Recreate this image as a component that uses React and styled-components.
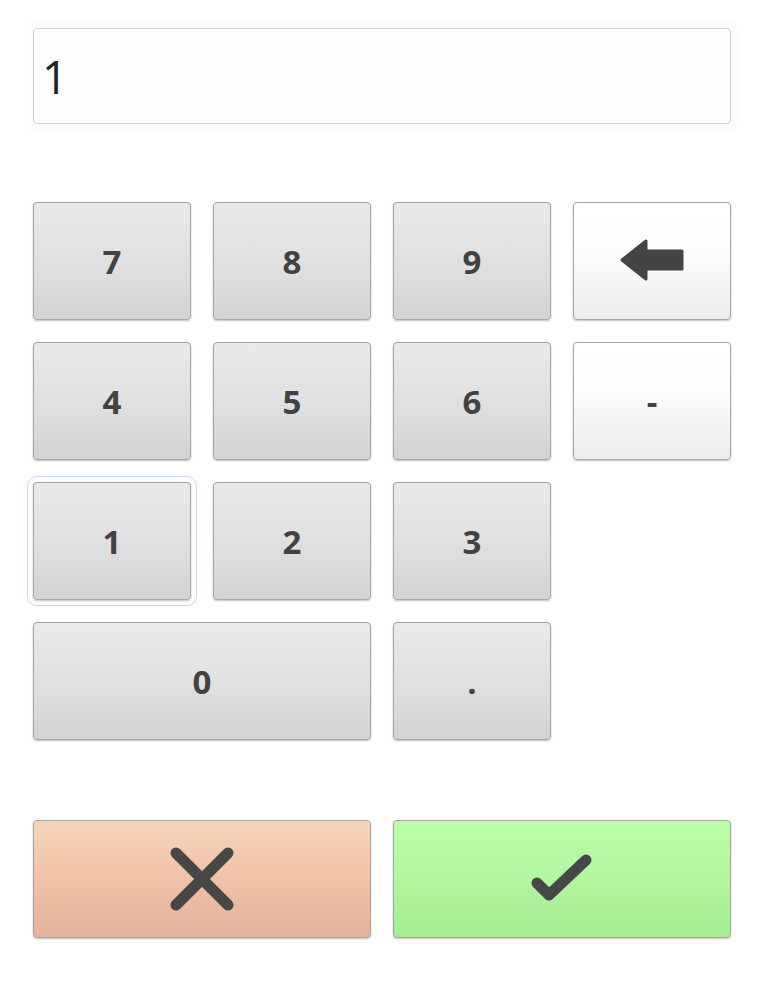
import React from "react";
import styled, { createGlobalStyle, css } from "styled-components";

const Global = createGlobalStyle`
  html, body { margin: 0; padding: 0; background: #ffffff; }
  body { font-family: "Open Sans", "DejaVu Sans", sans-serif; }
  * { box-sizing: border-box; }
`;

const Page = styled.div`
  width: 776px;
  height: 984px;
  padding: 28px 0 0 33px;
  display: flex;
  flex-direction: column;
`;

const Display = styled.div`
  width: 698px;
  height: 96px;
  border: 1px solid #d2d2d2;
  border-radius: 4px;
  background: #fefefe;
  box-shadow: 0 0 0 8px #fdfdfd;
  display: flex;
  align-items: center;
  padding-left: 8px;
  font-size: 45px;
  font-weight: 400;
  color: #222222;
`;

const Pad = styled.div`
  margin-top: 78px;
  display: grid;
  grid-template-columns: repeat(4, 158px);
  grid-auto-rows: 118px;
  gap: 22px;
`;

const variants = {
  gray: css`
    background: linear-gradient(#e9e9e9, #e3e3e3 40%, #d3d3d3);
  `,
  white: css`
    background: linear-gradient(#ffffff, #fdfdfd 40%, #ececec);
  `,
  cancel: css`
    background: linear-gradient(#f5d6bb, #f2c1a7 50%, #e2b29c);
  `,
  ok: css`
    background: linear-gradient(#bbfca9, #b2f6a0 50%, #a5ec91);
  `,
};

const Key = styled.button`
  grid-column: span ${(p) => p.$span || 1};
  border: 1px solid #a6a6a6;
  border-radius: 4px;
  box-shadow: 0 1px 2px rgba(0, 0, 0, 0.25);
  ${(p) => variants[p.$variant || "gray"]}
  font-family: "Open Sans", "DejaVu Sans", sans-serif;
  font-weight: 700;
  font-size: 33px;
  color: #424242;
  display: flex;
  align-items: center;
  justify-content: center;
  padding: 0;
  cursor: pointer;
  ${(p) =>
    p.$focused &&
    css`
      outline: 1px solid #c3dbf3;
      outline-offset: 5px;
    `}
`;

const Actions = styled.div`
  margin-top: 80px;
  display: grid;
  grid-template-columns: repeat(2, 338px);
  grid-auto-rows: 118px;
  gap: 22px;
`;

const BackIcon = () => (
  <svg width="66" height="44" viewBox="0 0 66 44" aria-hidden="true">
    <polygon
      points="3,21 27,2 27,12 63,12 63,30 27,30 27,40"
      fill="#444"
      stroke="#444"
      strokeWidth="3"
      strokeLinejoin="round"
    />
  </svg>
);

const CrossIcon = () => (
  <svg width="68" height="68" viewBox="0 0 68 68" aria-hidden="true">
    <path
      d="M8 8 L60 60 M60 8 L8 60"
      stroke="#474747"
      strokeWidth="11"
      strokeLinecap="round"
      fill="none"
    />
  </svg>
);

const CheckIcon = () => (
  <svg width="66" height="56" viewBox="0 0 66 56" aria-hidden="true">
    <path
      d="M8 32 L20 44 L57 9"
      stroke="#474747"
      strokeWidth="11"
      strokeLinecap="round"
      strokeLinejoin="round"
      fill="none"
    />
  </svg>
);

export default function App() {
  return (
    <>
      <Global />
      <Page>
        <Display>1</Display>
        <Pad>
          <Key>7</Key>
          <Key>8</Key>
          <Key>9</Key>
          <Key $variant="white">
            <BackIcon />
          </Key>
          <Key>4</Key>
          <Key>5</Key>
          <Key>6</Key>
          <Key $variant="white">-</Key>
          <Key $focused>1</Key>
          <Key>2</Key>
          <Key>3</Key>
          <span />
          <Key $span={2}>0</Key>
          <Key>.</Key>
        </Pad>
        <Actions>
          <Key $variant="cancel">
            <CrossIcon />
          </Key>
          <Key $variant="ok">
            <CheckIcon />
          </Key>
        </Actions>
      </Page>
    </>
  );
}
